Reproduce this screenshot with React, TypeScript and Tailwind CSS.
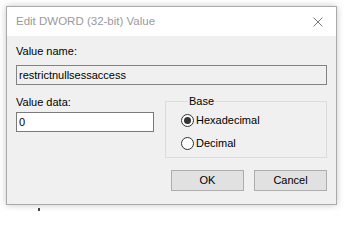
import React from 'react';

function Radio({ label, checked }: { label: string; checked?: boolean }) {
  return (
    <label className="flex items-center gap-[2px] h-[14px]">
      <span className="flex h-[13px] w-[13px] items-center justify-center rounded-full border border-[#333] bg-white">
        {checked && <span className="h-[7px] w-[7px] rounded-full bg-[#333]" />}
      </span>
      <span>{label}</span>
    </label>
  );
}

export default function App() {
  return (
    <div className="h-[212px] w-[344px] overflow-hidden bg-white pl-[6px] pt-[6px] font-['Liberation_Sans',Arial,sans-serif] text-[11px] leading-[13px] text-black">
      <div className="flex h-[199px] w-[331px] flex-col border border-[#a9a9a9] bg-[#f0f0f0] shadow-[0_0_7px_rgba(0,0,0,0.22)]">
        {/* title bar */}
        <div className="flex h-[29px] items-center justify-between bg-white pl-[9px] pr-[9px]">
          <span className="text-[11.5px] text-[#9a9a9a]">Edit DWORD (32-bit) Value</span>
          <svg width="10" height="10" viewBox="0 0 10 10" className="mr-[4px]">
            <path d="M0.5 0.5 L9.5 9.5 M9.5 0.5 L0.5 9.5" stroke="#7a7a7a" strokeWidth="1" />
          </svg>
        </div>

        <div className="flex flex-1 flex-col px-[9px] pt-[9px]">
          <div>Value name:</div>
          <input
            readOnly
            value="restrictnullsessaccess"
            className="mt-[7px] h-[20px] w-full border border-[#838383] bg-[#f0f0f0] px-[2px] text-[11px] outline-none"
          />

          <div className="mt-[10px] flex gap-[11px]">
            <div className="flex w-[138px] flex-col">
              <div className="mt-[1px]">Value data:</div>
              <input
                readOnly
                value="0"
                className="mt-[3px] h-[20px] w-full border border-[#7a7a7a] bg-white px-[2px] text-[11px] outline-none"
              />
            </div>
            <fieldset className="h-[63px] flex-1 border border-[#dcdcdc] pl-[15px] pt-[5px]">
              <legend className="ml-[7px] px-[1px]">Base</legend>
              <div className="flex flex-col gap-[9px]">
                <Radio label="Hexadecimal" checked />
                <Radio label="Decimal" />
              </div>
            </fieldset>
          </div>

          <div className="mt-[12px] flex justify-end gap-[10px]">
            <button className="h-[21px] w-[73px] border border-[#adadad] bg-[#e1e1e1] text-[11px]">OK</button>
            <button className="h-[21px] w-[73px] border border-[#adadad] bg-[#e1e1e1] text-[11px]">Cancel</button>
          </div>
        </div>
      </div>
      <div className="ml-[32px] mt-[3px] h-[3px] w-[2px] bg-[#444]" />
    </div>
  );
}
